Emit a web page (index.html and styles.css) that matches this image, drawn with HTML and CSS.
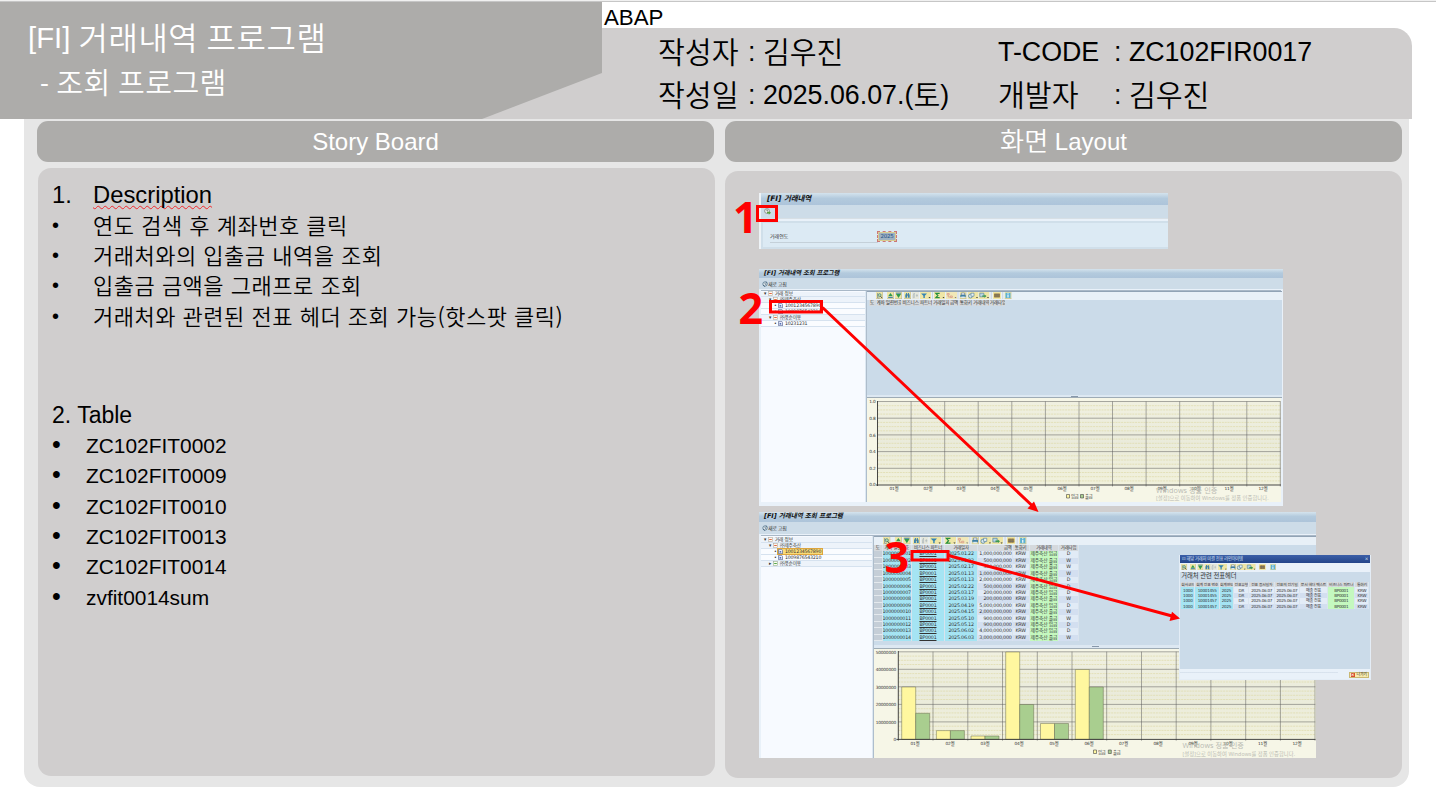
FILE: index.html
```html
<!DOCTYPE html>
<html lang="ko">
<head>
<meta charset="utf-8">
<title>[FI] 거래내역 프로그램</title>
<link rel="stylesheet" href="styles.css">
</head>
<body>
<svg class="defs" width="0" height="0">
  <defs>
    <symbol id="key" viewBox="0 0 7 7"><rect width="7" height="7" fill="#efe6a6"/><path d="M0 6.7h7M6.7 0v7" stroke="#b9b38a" stroke-width=".6"/></symbol>
    <symbol id="i-search" viewBox="0 0 7 7"><use href="#key"/><path d="M1.5 1v5h2" stroke="#789" fill="none" stroke-width=".7"/><circle cx="3.6" cy="3.1" r="1.5" fill="#a9d3b5" stroke="#4a7f6a" stroke-width=".7"/><path d="M4.5 4.2 6 6" stroke="#444" stroke-width=".9"/></symbol>
    <symbol id="i-up" viewBox="0 0 7 7"><use href="#key"/><path d="M3.5 1 5.7 4H1.3z" fill="#2f9a4d"/><path d="M1.2 5.3h4.6" stroke="#2b75a5" stroke-width="1.1"/></symbol>
    <symbol id="i-down" viewBox="0 0 7 7"><use href="#key"/><path d="M1 1.2h5" stroke="#2b75a5" stroke-width=".9"/><path d="M1 2h5L3.5 6z" fill="#2f9a4d"/></symbol>
    <symbol id="i-bino" viewBox="0 0 7 7"><use href="#key"/><path d="M1.3 5.8V3l1-2h.8v4.8zM3.9 5.8V1h.8l1 2v2.8z" fill="#3e83ad"/><path d="M3 3h1" stroke="#245" stroke-width=".8"/></symbol>
    <symbol id="i-next" viewBox="0 0 7 7"><rect width="7" height="7" fill="#e6e8dc"/><path d="M1.3 5.8V3l1-2v4.8zM3.9 3.5h2M4.9 2v3" stroke="#aeb9bd" stroke-width=".7" fill="none"/></symbol>
    <symbol id="i-filter" viewBox="0 0 11 7"><rect width="11" height="7" fill="#efe6a6"/><path d="M1 1.4h6L4.8 3.8V6H3.4V3.8z" fill="#3484b3"/><path d="M8.5 5.1h2l-1 1.2z" fill="#333"/></symbol>
    <symbol id="i-sum" viewBox="0 0 11 7"><rect width="11" height="7" fill="#efe6a6"/><path d="M5.7 1.3H1.9l2 2.2-2 2.2h3.8" stroke="#27913d" stroke-width="1.2" fill="none"/><path d="M8.5 5.1h2l-1 1.2z" fill="#333"/></symbol>
    <symbol id="i-sub" viewBox="0 0 11 7"><rect width="11" height="7" fill="#f1e8b8"/><path d="M1.2 1.5h2v1.4h-2zM4.3 4h2v1.5h-2zM2.2 3v2h2" stroke="#d99a88" stroke-width=".8" fill="none"/><path d="M8.5 5.1h2l-1 1.2z" fill="#777"/></symbol>
    <symbol id="i-print" viewBox="0 0 7 7"><use href="#key"/><path d="M1.8 1h3.4v2H1.8z" fill="#fff" stroke="#357" stroke-width=".5"/><rect x=".8" y="2.8" width="5.4" height="2.3" fill="#3e7fa5"/><path d="M1.8 4.4h3.4V6H1.8z" fill="#dce9ef"/></symbol>
    <symbol id="i-view" viewBox="0 0 11 7"><rect width="11" height="7" fill="#efe6a6"/><circle cx="3" cy="4" r="2" fill="#d8e8ee" stroke="#4d7c98" stroke-width=".7"/><path d="M3.5 1.2h3v3h-3z" fill="#e9f3f6" stroke="#4d7c98" stroke-width=".6"/><path d="M8.5 5.1h2l-1 1.2z" fill="#333"/></symbol>
    <symbol id="i-export" viewBox="0 0 11 7"><rect width="11" height="7" fill="#efe6a6"/><path d="M1.3 1.2h4v3.6h-4z" fill="#b9d6e4" stroke="#4d7c98" stroke-width=".6"/><path d="M3.7 3.4h2.2V2.4L8 4.1 5.9 5.9V4.8H3.7z" fill="#3b9950"/><path d="M8.5 5.1h2l-1 1.2z" fill="#333"/></symbol>
    <symbol id="i-grid" viewBox="0 0 8 7"><rect width="8" height="7" fill="#efe6a6"/><path d="M1 1.5h6v4H1z" fill="#b58b3b"/><path d="M1 2.8h6M1 4.2h6M3 1.5v4M5 1.5v4" stroke="#567" stroke-width=".5"/></symbol>
    <symbol id="i-info" viewBox="0 0 7 7"><use href="#key"/><rect x="1" y=".8" width="5" height="5.2" fill="#5cb1d3"/><path d="M3.5 1.3v.9M3.5 2.8v2.7" stroke="#fff" stroke-width="1.1"/></symbol>
    <symbol id="i-refresh" viewBox="0 0 7 7"><circle cx="3.5" cy="3.5" r="2.5" fill="#f1f6f7" stroke="#355a75" stroke-width=".8"/><path d="M1.2 4.8 3.5 6.6M4.4.6 6.4 2.4M3.5 2v1.8h1.3" stroke="#355a75" stroke-width=".8" fill="none"/></symbol>
    <symbol id="i-run" viewBox="0 0 7 7"><circle cx="3" cy="3" r="2.4" fill="#edf2ea" stroke="#666" stroke-width=".6"/><path d="M3 1.3V3h1" stroke="#444" stroke-width=".6" fill="none"/><path d="M3 4h1.8V3L7 4.8 4.8 6.8V5.6H3z" fill="#5ba040"/></symbol>
    <symbol id="i-folder" viewBox="0 0 5 5"><rect x=".4" y=".4" width="4.2" height="4.2" fill="#fff8ef" stroke="#b7aca0" stroke-width=".6"/><path d="M1.2 2.5h2.6" stroke="#dd5b32" stroke-width=".9"/></symbol>
    <symbol id="i-closed" viewBox="0 0 5 5"><rect x=".4" y=".4" width="4.2" height="4.2" fill="#f7fff0" stroke="#9cac90" stroke-width=".6"/><path d="M1.2 2.5h2.6" stroke="#3f9a32" stroke-width=".9"/></symbol>
    <symbol id="i-doc" viewBox="0 0 5 5"><path d="M.6.3h3L4.6 1.4v3.3h-4z" fill="#e9edfb" stroke="#35477d" stroke-width=".6"/><path d="M1.6 2h1.6v1.6H1.6z" fill="#5470b5"/></symbol>
    <symbol id="tools" viewBox="0 0 136 7">
      <use href="#i-search" width="7" height="7"/><use href="#i-up" x="11" width="7" height="7"/><use href="#i-down" x="19" width="7" height="7"/><use href="#i-bino" x="28" width="7" height="7"/><use href="#i-next" x="36" width="7" height="7"/><use href="#i-filter" x="44" width="11" height="7"/><use href="#i-sum" x="58" width="11" height="7"/><use href="#i-sub" x="70" width="11" height="7"/><use href="#i-print" x="83.500" width="7" height="7"/><use href="#i-view" x="91.500" width="11" height="7"/><use href="#i-export" x="102.500" width="11" height="7"/><use href="#i-grid" x="117" width="8" height="7"/><use href="#i-info" x="128.500" width="7" height="7"/>
      <path d="M56.500 0v7M82 0v7M115.300 0v7M126.700 0v7" stroke="#c0ccd6" stroke-width=".7"/>
    </symbol>
    <symbol id="tools-short" viewBox="0 0 108 7">
      <use href="#i-search" width="7" height="7"/><use href="#i-up" x="10" width="7" height="7"/><use href="#i-down" x="18.500" width="7" height="7"/><use href="#i-bino" x="26.500" width="7" height="7"/><use href="#i-next" x="34" width="7" height="7"/><use href="#i-filter" x="41.500" width="11" height="7"/><use href="#i-print" x="55.500" width="7" height="7"/><use href="#i-view" x="63" width="11" height="7"/><use href="#i-export" x="74" width="11" height="7"/><use href="#i-grid" x="88.500" width="8" height="7"/><use href="#i-info" x="101" width="7" height="7"/>
    </symbol>
    <linearGradient id="plot" x1="0" y1="0" x2="0" y2="1"><stop offset="0" stop-color="#f0f0e0"/><stop offset=".5" stop-color="#eaebdb"/><stop offset="1" stop-color="#f1f1dc"/></linearGradient>
    <path id="dash" d="M0 0H417" stroke="#e0dcae" stroke-width=".8" stroke-dasharray="2 .8"/>
    <g id="dash3"><use href="#dash" y="4.200"/><use href="#dash" y="8.400"/><use href="#dash" y="12.600"/></g>
  </defs>
</svg>

<main class="slide">
  <header class="top">
    <div class="title">
      <h1>[FI] <span class="ko">거래내역</span> <span class="ko">프로그램</span></h1>
      <p>- <span class="ko">조회</span> <span class="ko">프로그램</span></p>
    </div>
    <div class="meta-side">
      <div class="lang">ABAP</div>
      <dl class="meta">
        <div><dt><span class="ko">작성자</span></dt><dd>: <span class="ko">김우진</span></dd></div>
        <div><dt class="wide">T-CODE</dt><dd>: ZC102FIR0017</dd></div>
        <div><dt><span class="ko">작성일</span></dt><dd>: 2025.06.07.(<span class="ko">토</span>)</dd></div>
        <div><dt class="wide"><span class="ko">개발자</span></dt><dd>: <span class="ko">김우진</span></dd></div>
      </dl>
    </div>
  </header>

  <div class="board">
    <section class="col">
      <h2 class="cap">Story Board</h2>
      <div class="panel story">
        <h3><span class="num">1.</span><span class="spell">Description</span></h3>
        <ul class="desc">
          <li>연도 검색 후 계좌번호 클릭</li>
          <li>거래처와의 입출금 내역을 조회</li>
          <li>입출금 금액을 그래프로 조회</li>
          <li>거래처와 관련된 전표 헤더 조회 가능(핫스팟 클릭)</li>
        </ul>
        <h3 class="second">2. Table</h3>
        <ul class="tables">
          <li>ZC102FIT0002</li><li>ZC102FIT0009</li><li>ZC102FIT0010</li><li>ZC102FIT0013</li><li>ZC102FIT0014</li><li>zvfit0014sum</li>
        </ul>
      </div>
    </section>

    <section class="col">
      <h2 class="cap"><span class="ko">화면</span> Layout</h2>
      <div class="panel canvas">

        <div class="win w1">
          <div class="bar">[FI] 거래내역</div>
          <div class="strip"><svg width="7" height="7"><use href="#i-run"/></svg></div>
          <div class="form"><span class="label">거래연도</span><span class="field">2025</span></div>
        </div>

        <div class="win w2">
          <div class="bar">[FI] 거래내역 조회 프로그램</div>
          <div class="strip"><svg width="6" height="6"><use href="#i-refresh"/></svg>새로 고침</div>
          <div class="split">
            <div class="tree">
              <p class="l0"><i>▾</i><svg><use href="#i-folder"/></svg>거래 정보</p>
              <p class="l1"><i>▾</i><svg><use href="#i-folder"/></svg>㈜제주축산</p>
              <p class="l2"><i>•</i><svg><use href="#i-doc"/></svg>1001234567890</p>
              <p class="l2"><i>•</i><svg><use href="#i-doc"/></svg>1009876543210</p>
              <p class="l1"><i>▾</i><svg><use href="#i-folder"/></svg>㈜풍순이용</p>
              <p class="l2"><i>•</i><svg><use href="#i-doc"/></svg>10231231</p>
            </div>
            <div class="side">
              <div class="grid-area">
                <div class="tools"><svg width="136" height="7"><use href="#tools"/></svg></div>
                <div class="heads"><span>도</span><span>계좌 일련번호</span><span>비즈니스 파트너</span><span>거래일자</span><span>금액</span><span>통화키</span><span>거래내역</span><span>거래타입</span></div>
              </div>
              <div class="handle"></div>
              <svg class="chart" width="414" height="104" viewBox="867 398 414 104">
                <rect x="877.500" y="401.500" width="403" height="83.500" fill="url(#plot)"/>
                <g><use href="#dash3" x="877.500" y="401.500"/><use href="#dash3" x="877.500" y="418.200"/><use href="#dash3" x="877.500" y="434.900"/><use href="#dash3" x="877.500" y="451.600"/><use href="#dash3" x="877.500" y="468.300"/></g>
                <path class="gl" d="M877.500 401.500h403M877.500 418.200h403M877.500 434.900h403M877.500 451.600h403M877.500 468.300h403M911.100 401.500v85M944.700 401.500v85M978.200 401.500v85M1011.800 401.500v85M1045.400 401.500v85M1079 401.500v85M1112.500 401.500v85M1146.100 401.500v85M1179.700 401.500v85M1213.200 401.500v85M1246.800 401.500v85M1280.300 401.500v85"/>
                <path class="ax" d="M877.500 401v85M876 485h405"/>
                <g class="yl"><text x="875.500" y="403">1.0</text><text x="875.500" y="419.800">0.8</text><text x="875.500" y="436.500">0.6</text><text x="875.500" y="453.200">0.4</text><text x="875.500" y="469.900">0.2</text><text x="875.500" y="486.200">0.0</text></g>
                <g class="xl"><text x="894" y="490">01월</text><text x="928" y="490">02월</text><text x="961" y="490">03월</text><text x="995" y="490">04월</text><text x="1028" y="490">05월</text><text x="1062" y="490">06월</text><text x="1095" y="490">07월</text><text x="1129" y="490">08월</text><text x="1162" y="490">09월</text><text x="1196" y="490">10월</text><text x="1229" y="490">11월</text><text x="1263" y="490">12월</text></g>
                <path class="key-y" d="M1066.500 494.500h3v3.500h-3z"/><path class="key-g" d="M1080.500 494.500h3v3.500h-3z"/>
                <g class="lg"><text x="1071" y="498">입금</text><text x="1085" y="498">출금</text></g>
                <text class="wm big" x="1156" y="493">Windows 정품 인증</text><text class="wm" x="1156" y="500">[설정]으로 이동하여 Windows를 정품 인증합니다.</text>
              </svg>
            </div>
          </div>
        </div>

        <div class="win w3">
          <div class="bar">[FI] 거래내역 조회 프로그램</div>
          <div class="strip"><svg width="6" height="6"><use href="#i-refresh"/></svg>새로 고침</div>
          <div class="split">
            <div class="tree">
              <p class="l0"><i>▾</i><svg><use href="#i-folder"/></svg>거래 정보</p>
              <p class="l1"><i>▾</i><svg><use href="#i-folder"/></svg>㈜제주축산</p>
              <p class="l2"><i>•</i><span class="sel"><svg><use href="#i-doc"/></svg>1001234567890</span></p>
              <p class="l2"><i>•</i><svg><use href="#i-doc"/></svg>1009876543210</p>
              <p class="l1"><i>▸</i><svg><use href="#i-closed"/></svg>㈜풍순이용</p>
            </div>
            <div class="side">
              <div class="grid-area">
                <div class="tools"><svg width="144" height="7.400" viewBox="0 0 136 7" preserveAspectRatio="none"><use href="#tools"/></svg></div>
                <table class="ledger">
                  <colgroup><col class="c0"><col class="c1"><col class="c2"><col class="c3"><col class="c4"><col class="c5"><col class="c6"><col class="c7"></colgroup>
                  <tr><th>도</th><th>계좌 일련번호</th><th>비즈니스 파트너</th><th>거래일자</th><th>금액</th><th>통화키</th><th>거래내역</th><th>거래타입</th></tr>
                  <tr><td></td><td>1000000001</td><td>BP0001</td><td>2025.01.22</td><td>1,000,000,000</td><td>KRW</td><td>제주축산 입금</td><td>D</td></tr>
                  <tr><td></td><td>1000000002</td><td>BP0001</td><td>2025.01.22</td><td>500,000,000</td><td>KRW</td><td>제주축산 출금</td><td>W</td></tr>
                  <tr><td></td><td>1000000003</td><td>BP0001</td><td>2025.02.17</td><td>500,000,000</td><td>KRW</td><td>제주축산 출금</td><td>W</td></tr>
                  <tr><td></td><td>1000000004</td><td>BP0001</td><td>2025.01.13</td><td>1,000,000,000</td><td>KRW</td><td>제주축산 출금</td><td>W</td></tr>
                  <tr><td></td><td>1000000005</td><td>BP0001</td><td>2025.01.13</td><td>2,000,000,000</td><td>KRW</td><td>제주축산 입금</td><td>D</td></tr>
                  <tr><td></td><td>1000000006</td><td>BP0001</td><td>2025.02.22</td><td>500,000,000</td><td>KRW</td><td>제주축산 입금</td><td>D</td></tr>
                  <tr><td></td><td>1000000007</td><td>BP0001</td><td>2025.03.17</td><td>200,000,000</td><td>KRW</td><td>제주축산 입금</td><td>D</td></tr>
                  <tr><td></td><td>1000000008</td><td>BP0001</td><td>2025.03.19</td><td>200,000,000</td><td>KRW</td><td>제주축산 출금</td><td>W</td></tr>
                  <tr><td></td><td>1000000009</td><td>BP0001</td><td>2025.04.19</td><td>5,000,000,000</td><td>KRW</td><td>제주축산 입금</td><td>D</td></tr>
                  <tr><td></td><td>1000000010</td><td>BP0001</td><td>2025.04.15</td><td>2,000,000,000</td><td>KRW</td><td>제주축산 출금</td><td>W</td></tr>
                  <tr><td></td><td>1000000011</td><td>BP0001</td><td>2025.05.10</td><td>900,000,000</td><td>KRW</td><td>제주축산 출금</td><td>W</td></tr>
                  <tr><td></td><td>1000000012</td><td>BP0001</td><td>2025.05.12</td><td>900,000,000</td><td>KRW</td><td>제주축산 입금</td><td>D</td></tr>
                  <tr><td></td><td>1000000013</td><td>BP0001</td><td>2025.06.02</td><td>4,000,000,000</td><td>KRW</td><td>제주축산 입금</td><td>D</td></tr>
                  <tr><td></td><td>1000000014</td><td>BP0001</td><td>2025.06.03</td><td>3,000,000,000</td><td>KRW</td><td>제주축산 출금</td><td>W</td></tr>
                </table>
              </div>
              <div class="handle"></div>
              <svg class="chart" width="442" height="109" viewBox="874 649 442 109">
                <rect x="898.300" y="651.700" width="417" height="87.700" fill="url(#plot)"/>
                <g><use href="#dash3" x="898.300" y="651.900"/><use href="#dash3" x="898.300" y="669.400"/><use href="#dash3" x="898.300" y="686.900"/><use href="#dash3" x="898.300" y="704.500"/><use href="#dash3" x="898.300" y="722"/></g>
                <path class="gl" d="M898.300 651.800h417M898.300 669.300h417M898.300 686.800h417M898.300 704.400h417M898.300 721.900h417M933 651.700v89M967.800 651.700v89M1002.500 651.700v89M1037.300 651.700v89M1072 651.700v89M1106.700 651.700v89M1141.500 651.700v89M1176.200 651.700v89M1210.900 651.700v89M1245.700 651.700v89M1280.400 651.700v89M1315 651.700v89"/>
                <path class="by" d="M901.700 687h14v52.400h-14zM936.400 730.600h14v8.800h-14zM971 736h14v3.400h-14zM1005.700 652h14v87.400h-14zM1040.500 723.500h14v15.900h-14zM1075.300 669.500h14v69.900h-14z"/>
                <path class="bg" d="M915.700 713.300h14v26.100h-14zM950.400 730.600h14v8.800h-14zM985 736h14v3.400h-14zM1019.700 704.500h14v34.900h-14zM1054.500 723.500h14v15.900h-14zM1089.300 687h14v52.400h-14z"/>
                <path class="ax" d="M898.300 651v89.500M896.500 739.400h419"/>
                <g class="yl"><text x="896" y="653.500">50000000</text><text x="896" y="671">40000000</text><text x="896" y="688.500">30000000</text><text x="896" y="706">20000000</text><text x="896" y="723.500">10000000</text><text x="896" y="741">0</text></g>
                <g class="xl"><text x="915" y="745">01월</text><text x="950" y="745">02월</text><text x="985" y="745">03월</text><text x="1019" y="745">04월</text><text x="1054" y="745">05월</text><text x="1089" y="745">06월</text><text x="1123.500" y="745">07월</text><text x="1158" y="745">08월</text><text x="1193" y="745">09월</text><text x="1228" y="745">10월</text><text x="1262.500" y="745">11월</text><text x="1297" y="745">12월</text></g>
                <path class="key-y" d="M1093.500 750h3v3.500h-3z"/><path class="key-g" d="M1108.300 750h3v3.500h-3z"/>
                <g class="lg"><text x="1098" y="753.500">입금</text><text x="1113" y="753.500">출금</text></g>
                <text class="wm big" x="1182.500" y="748">Windows 정품 인증</text><text class="wm" x="1182.500" y="755.500">[설정]으로 이동하여 Windows를 정품 인증합니다.</text>
              </svg>
            </div>
          </div>
        </div>

        <div class="win pop">
          <div class="pbar"><span>⊡ 해당 거래처 미결 전표 라인아이템</span><span>×</span></div>
          <div class="ptools"><svg width="95" height="6.400" viewBox="0 0 108 7" preserveAspectRatio="none"><use href="#tools-short"/></svg></div>
          <div class="pbody">
            <h4>거래처 관련 전표헤더</h4>
            <table class="docs">
              <colgroup><col class="d0"><col class="d1"><col class="d2"><col class="d3"><col class="d4"><col class="d5"><col class="d6"><col class="d7"><col class="d8"></colgroup>
              <tr><th>회사코드</th><th>회계 전표 번호</th><th>회계연도</th><th>전표유형</th><th>전표 증서일자</th><th>전표의 전기일</th><th>문서 헤더 텍스트</th><th>비즈니스 파트너</th><th>통화키</th></tr>
              <tr><td>1000</td><td>10001455</td><td>2025</td><td>DR</td><td>2025.06.07</td><td>2025.06.07</td><td>매출 전표</td><td>BP0001</td><td>KRW</td></tr>
              <tr><td>1000</td><td>10001455</td><td>2025</td><td>DR</td><td>2025.06.07</td><td>2025.06.07</td><td>매출 전표</td><td>BP0001</td><td>KRW</td></tr>
              <tr><td>1000</td><td>10001457</td><td>2025</td><td>DR</td><td>2025.06.07</td><td>2025.06.07</td><td>매출 전표</td><td>BP0001</td><td>KRW</td></tr>
              <tr><td>1000</td><td>10001457</td><td>2025</td><td>DR</td><td>2025.06.07</td><td>2025.06.07</td><td>매출 전표</td><td>BP0001</td><td>KRW</td></tr>
            </table>
          </div>
          <div class="pfoot"><span class="btn"><b>×</b>나가기</span></div>
        </div>

        <svg class="marks" width="677" height="607" viewBox="725 171 677 607">
          <g class="box"><rect x="757.500" y="206.500" width="19" height="14"/><rect x="770.500" y="301.500" width="51" height="10.500"/><rect x="912" y="551.500" width="36" height="8.500"/></g>
          <path class="line" d="M822.500 307.500 927 406.500 1032 505.500M948.500 555.500 1172 616"/>
          <path class="tip" d="M1038.500 512 1027.500 508.500 1034 501.500zM1180 618.500 1169.500 621 1172 611.800z"/>
          <g class="no"><text x="733" y="233">1</text><text x="738.500" y="324">2</text><text x="884.500" y="572.500">3</text></g>
        </svg>
      </div>
    </section>
  </div>
</main>
</body>
</html>
```
FILE: styles.css
```css
* { box-sizing: border-box; }
body { margin: 0; background: #fff; font-family: "Liberation Sans", "Noto Sans CJK KR", sans-serif; color: #000; }
h1, h2, h3, h4, p, ul, dl, dd { margin: 0; padding: 0; font-weight: 400; }
.defs { position: absolute; }
.slide { width: 1436px; height: 810px; overflow: hidden; border-top: 1px solid #f0f0f0; box-shadow: inset 0 1px #c6c6c6; padding-top: 1px; }
.ko { font-family: "Noto Sans CJK KR", sans-serif; font-weight: 350; font-size: 1.09em; line-height: 1; vertical-align: -2px; }

.top { display: flex; height: 117px; background: linear-gradient(#d0cece, #d0cece) 482px 27px / 130px 90px no-repeat; }
.title { width: 602px; padding: 15px 0 0 28px; color: #fff; background: #adacaa; clip-path: polygon(0 0, 100% 0, 100% 71px, 482px 100%, 0 100%); }
.title h1 { font-size: 29.3px; line-height: 42px; }
.title h1 .ko { letter-spacing: .6px; }
.title p .ko { letter-spacing: .4px; }
.title p { font-size: 26.7px; line-height: 49px; padding-left: 12px; }
.meta-side { width: 810px; }
.lang { height: 26px; padding: 2px 0 0 2px; font-size: 22.3px; line-height: 27px; }
.meta { height: 91px; background: #d0cece; border-radius: 0 18px 0 0; display: grid; grid-template-columns: 340px 1fr; grid-template-rows: 43px 43px; padding: 3px 0 0 56px; font-size: 26.8px; line-height: 43px; white-space: nowrap; }
.meta > div { display: flex; }
.meta dt { width: 90px; }
.meta dt.wide { width: 116px; }

.board { width: 1385px; height: 668px; margin-left: 24px; padding: 2px 7px 9px 13px; background: #e6e6e6; border-radius: 0 0 16px 16px; display: grid; grid-template-columns: 677px 677px; gap: 11px; }
.cap { height: 41px; border-radius: 11px; background: #adacaa; color: #fff; font-size: 24px; line-height: 41px; text-align: center; }
.cap .ko { vertical-align: -1px; }
.panel { background: #d0cece; border-radius: 13px; height: 607px; }
.story { width: 677px; height: 608px; margin: 6px 0 0 1px; padding: 12px 0 0 14px; }
.story h3 { font-size: 23.8px; line-height: 30.500px; display: flex; }
.num { width: 41px; }
.spell { text-decoration: underline wavy #f0282d 1px; text-underline-offset: 2px; text-decoration-skip-ink: none; }
.story ul { list-style: none; }
.story li { display: flex; height: 30.400px; align-items: center; white-space: nowrap; }
.desc { margin-top: -2px; }
.desc li { font: 350 22px/30px "Noto Sans CJK KR", sans-serif; letter-spacing: .5px; }
.desc li::before { content: "•"; width: 41px; font: 20px/30px "Liberation Sans", sans-serif; padding-top: 2px; }
.story .second { margin-top: 70px; font-size: 23px; }
.tables li { font-size: 20.900px; }
.tables li::before { content: "•"; width: 34px; font-size: 25px; line-height: 26px; margin-top: -4px; }

.canvas { position: relative; margin-top: 9px; }
.win { position: absolute; overflow: hidden; display: flex; flex-direction: column; font: 5px/6px "DejaVu Sans", "Noto Sans CJK KR", sans-serif; letter-spacing: -.3px; color: #333; white-space: nowrap; background: #e9f1f9; }
.win svg { flex: none; }
.bar { flex: none; background: linear-gradient(#d4e3ed, #b3cadd 45%, #adc4da); color: #111; font-size: 6.500px; font-weight: 700; font-style: italic; letter-spacing: -.1px; }
.strip { flex: none; display: flex; align-items: center; background: #cddce8; padding-left: 3px; }
.w1 { left: 34px; top: 21.500px; width: 409px; height: 56.500px; border-left: 2px solid #eef3f7; }
.w1 .bar { height: 12.500px; line-height: 11px; padding-left: 6px; font-size: 7.500px; }
.w1 .strip { height: 14px; border-bottom: 1px solid #d7dfe5; }
.form { flex: 1; margin-top: 2px; background: #dceaf4; border: 1.500px solid #d0dfea; border-width: 2px 0 2px 2px; display: flex; align-items: flex-start; padding: 9px 0 0 7px; }
.label { width: 108px; height: 11px; padding-top: 1px; border-bottom: 1px solid #c4d0d9; letter-spacing: 0; }
.field { width: 18px; height: 9px; background: #9fb2c2; border: 1px solid #d9cc91; outline: .5px dashed #c77; color: #234f87; font-size: 5.500px; line-height: 7px; text-align: center; }

.w2 { left: 34px; top: 98px; width: 524px; height: 237px; }
.w3 { left: 34px; top: 341px; width: 557px; height: 246px; }
.w2 .bar { height: 9px; line-height: 8px; padding-left: 5px; font-size: 6.300px; }
.w2 .strip { height: 11px; }
.w3 .strip { height: 12px; }
.w3 .bar { height: 10px; line-height: 9px; padding-left: 5px; font-size: 6.600px; }
.split { flex: 1; min-height: 0; margin: 1px 0 0 2px; display: flex; gap: 2px; background: #dde8f2; border-top: .5px solid #a9b8c7; }
.w2 .split { margin-right: 2px; margin-bottom: 4px; }
.tree { width: 104px; background: #f7faff; padding-top: .5px; }
.w3 .tree { width: 111px; }
.tree p { display: flex; align-items: center; height: 5.900px; background: #edf3fa; border-bottom: .5px solid #d6e2ef; line-height: 5px; font-size: 4.700px; letter-spacing: -.2px; }
.w3 .tree p { height: 6.150px; }
.tree p.l2 { background: #fafcff; }
.tree svg { width: 5px; height: 5px; margin-right: 2px; }
.tree i { width: 4px; font-style: normal; }
.l0 { padding-left: 3px; } .l1 { padding-left: 8px; } .l2 { padding-left: 13px; }
.sel { display: flex; align-items: center; height: 5.500px; background: #fadb78; padding-right: 1px; outline: .4px solid #dda53e; }
.side { flex: 1; min-width: 0; display: flex; flex-direction: column; border-left: 1px solid #aebdcc; margin-right: -1px; }
.w2 .side, .w3 .side { margin-left: -1px; }
.grid-area { flex: none; background: #cbdbe9; border-top: .5px solid #91a3b5; }
.w2 .grid-area { height: 103.500px; }
.w3 .grid-area { height: 109px; }
.tools { height: 7.800px; padding-left: 9px; background: #e8f0f7; display: flex; align-items: center; }
.heads { display: flex; gap: 1px; padding: 0 1.500px; }
.heads span { background: #d5d9dd; font-size: 4.600px; letter-spacing: -.2px; overflow: hidden; text-align: center; width: 15.500px; }
.heads span:nth-child(1) { width: 7px; }
.heads span:nth-child(2) { width: 24.800px; }
.heads span:nth-child(3) { width: 30px; }
.heads span:nth-child(5) { width: 8.500px; }
.heads span:nth-child(6) { width: 13px; }
.handle { flex: none; height: 3.500px; background: linear-gradient(#8798aa, #8798aa) 50% 1px / 7px 1px no-repeat, #dde8f2; border-bottom: 1px solid #9eabb5; }
.chart { display: block; background: #f6f6e7; }
.gl { fill: none; stroke: #555; stroke-opacity: .62; stroke-width: .8; }
.ax { fill: none; stroke: #333; stroke-width: .9; }
.yl text, .xl text, .lg text { font: 4.300px "DejaVu Sans", "Noto Sans CJK KR", sans-serif; letter-spacing: -.2px; fill: #333; }
.yl text { text-anchor: end; }
.xl text { text-anchor: middle; }
.by, .bg { stroke: #696b50; stroke-width: .5; }
.by, .key-y { fill: #fff79f; }
.bg, .key-g { fill: #a9ce8f; }
.key-y, .key-g { stroke: #444; stroke-width: .6; }
.wm { font: 5.300px "Open Sans", "Noto Sans CJK KR", sans-serif; letter-spacing: .06px; fill: #b9bab2; }
.wm.big { font-size: 7.200px; }

table { border-collapse: separate; border-spacing: 0; table-layout: fixed; }
th, td { padding: 0; overflow: hidden; font-weight: 400; text-align: center; }
.ledger { width: 205px; }
.ledger tr { height: 6.430px; }
.ledger th, .ledger td { height: 6.430px; line-height: 6px; font-size: 4.800px; letter-spacing: -.22px; border-right: .7px solid #d9e3ed; }
.ledger th, .docs th { background: #d5d9dd; font-size: 4.400px; letter-spacing: -.2px; }
.ledger td { background: #d3dff0; }
.ledger tr:nth-child(even) td { background: #e1ebf6; }
.ledger tr td:nth-child(1) { background: #c5ced7; border-bottom: .5px solid #e4e9ed; }
.ledger tr td:nth-child(-n+4):not(:first-child) { background: #a5e4f3; }
.ledger td:nth-child(3) { text-decoration: underline; text-decoration-thickness: .5px; }
.ledger td:nth-child(5), .ledger th:nth-child(5) { text-align: right; }
.ledger tr td:nth-child(7) { background: #c4f8bf; }
.c0 { width: 8.500px; } .c1 { width: 29.300px; } .c2 { width: 33.300px; } .c3 { width: 33px; } .c4 { width: 34.500px; } .c5 { width: 17px; } .c6 { width: 29.500px; } .c7 { width: 19.900px; }

.pop { left: 454px; top: 384px; width: 192px; height: 125px; border: 1px solid #e4edf6; border-top: 0; }
.pbar { flex: none; height: 7.500px; padding: 0 2px; display: flex; justify-content: space-between; align-items: center; background: linear-gradient(#3c5fa8, #244589); color: #d6e2f5; font-size: 4.300px; letter-spacing: -.25px; }
.ptools { flex: none; height: 9.500px; padding-left: 1px; display: flex; align-items: center; }
.pbody { height: 96.500px; background: #cbdbe9; padding-left: 1.300px; }
.pbody h4 { height: 10px; font-size: 6.300px; line-height: 8.500px; letter-spacing: -.1px; }
.docs { width: 188px; }
.docs tr, .docs th, .docs td { height: 5.400px; line-height: 5px; font-size: 4.100px; letter-spacing: -.25px; }
.docs th, .docs td { border-right: .6px solid #dae4ee; }
.docs th { font-size: 3.900px; }
.docs td { background: #d3dff0; }
.docs tr:nth-child(even) td { background: #e3ecf7; }
.docs tr td:nth-child(-n+3) { background: #a5e4f3; }
.docs tr td:nth-child(8) { background: #c4f8bf; }
.d0 { width: 14px; } .d1 { width: 24.700px; } .d2 { width: 14px; } .d3 { width: 15.500px; } .d4 { width: 25.500px; } .d5 { width: 25px; } .d6 { width: 28px; } .d7 { width: 27.500px; } .d8 { width: 13.800px; }
.pfoot { flex: 1; display: flex; justify-content: flex-end; align-items: flex-end; padding: 0 1px 1px; background: linear-gradient(#d1dce8, #d1dce8) 0 3px / 158px .7px no-repeat; }
.btn { width: 20.500px; height: 6.300px; background: #f8ebad; border: .5px solid #c9b873; display: flex; gap: 2px; align-items: center; padding-left: 1px; font-size: 4px; line-height: 5px; }
.btn b { width: 4px; height: 4px; background: #d7502e; color: #fff; line-height: 4px; text-align: center; }

.marks { position: absolute; left: 0; top: 0; }
.box rect { fill: none; stroke: #f00; stroke-width: 3; }
.line { fill: none; stroke: #f00; stroke-width: 3; }
.tip, .no text { fill: #f00; }
.no text { font: 700 43px "Open Sans", "Noto Sans", sans-serif; }
```
